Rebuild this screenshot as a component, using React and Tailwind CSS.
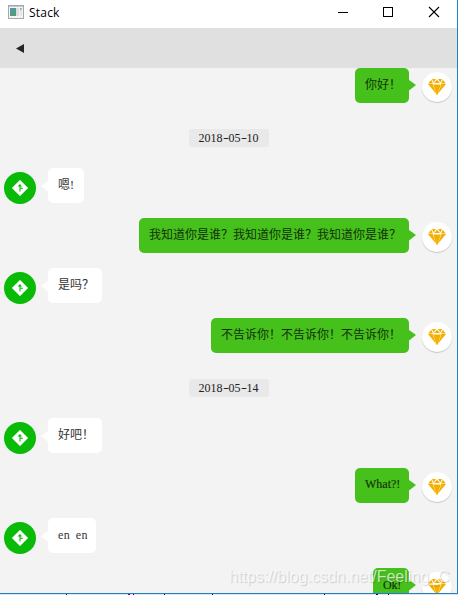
import React from "react";

const messages = [
    { id: 1, type: "sent", text: "你好！", width: "w-[54px] pt-[9px]" },
    { id: 2, type: "date", text: "2018-05-10" },
    { id: 3, type: "received", text: "嗯!", width: "w-[36px] pt-[9px]" },
    { id: 4, type: "sent", text: "我知道你是谁？我知道你是谁？我知道你是谁？", width: "w-[270px] pt-[9px]" },
    { id: 5, type: "received", text: "是吗？", width: "w-[54px] pt-[9px]" },
    { id: 6, type: "sent", text: "不告诉你！不告诉你！不告诉你！", width: "w-[198px] pt-[9px]" },
    { id: 7, type: "date", text: "2018-05-14" },
    { id: 8, type: "received", text: "好吧！", width: "w-[54px] pt-[9px]" },
    { id: 9, type: "sent", text: "What?!", width: "w-[54px] pt-[8px] [-webkit-text-stroke:0.15px]" },
    { id: 10, type: "received", text: "en en", width: "w-[48px] pt-[9px] tracking-[0.3px] [word-spacing:2.6px]" },
    { id: 11, type: "sent", text: "Ok!", width: "w-[36px] pt-[9px] tracking-[-0.2px] [-webkit-text-stroke:0.15px]" },
];

// Marks left behind by the window underneath
const specks = [
    { x: 66, w: 1, color: "#222222" },
    { x: 128, w: 2, color: "#800080" },
    { x: 133, w: 1, color: "#00007a" },
    { x: 164, w: 1, color: "#00007a" },
    { x: 212, w: 1, color: "#00007a" },
    { x: 324, w: 1, color: "#00007a" },
    { x: 376, w: 2, color: "#00007a" },
    { x: 388, w: 1, color: "#00007a" },
];

function AppIcon() {
    return (
        <svg width="16" height="14" viewBox="0 0 16 14">
            <defs>
                <linearGradient id="pane" x1="0" y1="0" x2="0.6" y2="1">
                    <stop offset="0" stopColor="#5b8fc0" />
                    <stop offset="1" stopColor="#4da26b" />
                </linearGradient>
            </defs>
            <rect x="0.5" y="0.5" width="15" height="13" fill="#f4f4f4" stroke="#a3a8ae" />
            <path d="M1 1.5h14" stroke="#c3c7cd" />
            <rect x="2" y="3" width="6" height="8" fill="url(#pane)" />
            <rect x="8" y="3" width="3" height="8" fill="#dedede" />
            <rect x="12" y="3" width="2" height="8" fill="#e4e9e8" />
            <path d="M12 6V3h2v1z" fill="#8db5cc" />
        </svg>
    );
}

function TitleBar() {
    return (
        <div className="flex h-7 shrink-0 items-start bg-white">
            <div className="ml-2 mt-[5px]">
                <AppIcon />
            </div>
            <span className="ml-[5px] mt-[4px] flex-1 font-['Open_Sans',sans-serif] text-[12px] leading-[18px] tracking-[0.2px] text-black">
                Stack
            </span>
            <svg className="mr-[17px]" width="103" height="24" fill="none" stroke="#000" shapeRendering="crispEdges">
                <path d="M1 12.5h10" />
                <rect x="46.5" y="7.5" width="9" height="9" />
                <path d="M92 7l10 10M102 7l-10 10" shapeRendering="auto" strokeWidth="1.1" />
            </svg>
        </div>
    );
}

function DiamondAvatar() {
    return (
        <div className="mt-1 flex h-[30px] w-[30px] items-center justify-center rounded-full bg-white shadow-[0_1px_1px_rgba(0,0,0,0.18)]">
            <svg width="18" height="16" viewBox="0 0 18 16">
                <path d="M4 0h4L5.5 3.6zM10 0h4l-1.5 3.6zM9 0.8L12 4H6zM3.2 0.8L5 4.6H0.2zM14.8 0.8l3 3.8H13z" fill="#f4b000" />
                <path d="M0 5h4.6L8 14.8zM18 5h-4.6L10 14.8zM5.2 5.6h7.6L9.4 16h-0.8z" fill="#f4b000" />
            </svg>
        </div>
    );
}

function SignAvatar() {
    return (
        <div className="mt-1 flex h-8 w-8 items-center justify-center rounded-full bg-[#09bb07]">
            <svg width="18" height="18" viewBox="0 0 18 18">
                <path d="M9 1.2L16.8 9 9 16.8 1.2 9z" fill="#fff" stroke="#fff" strokeWidth="0.6" strokeLinejoin="round" />
                <path d="M6.5 7.5L9 5l2 2.5z" fill="#09bb07" />
                <path d="M9 6.5v6M9 9.3h3" fill="none" stroke="#09bb07" strokeWidth="1.1" />
            </svg>
        </div>
    );
}

function Bubble({ text, width, className }) {
    return (
        <div
            className={`h-[35px] whitespace-nowrap rounded-[5px] pl-[10px] font-['Liberation_Serif','Noto_Sans_CJK_SC',serif] text-[12px] leading-[16px] ${width} ${className}`}
        >
            {text}
        </div>
    );
}

function DateRow({ text }) {
    return (
        <div className="flex h-[50px] shrink-0 justify-center pt-[11px]">
            <div className="flex h-[18px] w-[80px] items-center justify-center rounded-[3px] bg-[#e9e9e9] font-['Liberation_Serif',serif] text-[12px] leading-[18px] text-[#222]">
                {text.split("-").map((part, i) => (
                    <React.Fragment key={i}>
                        {i > 0 && <span className="w-[6px] scale-x-150 text-center">-</span>}
                        <span>{part}</span>
                    </React.Fragment>
                ))}
            </div>
        </div>
    );
}

function SentRow({ text, width }) {
    return (
        <div className="flex h-[50px] shrink-0 items-start justify-end pr-[5px]">
            <Bubble text={text} width={width} className="bg-[#46c01b] text-[#12300a]" />
            <svg className="mr-[6px] mt-[12px]" width="7" height="11">
                <path d="M0 0l7 5-7 5.5z" fill="#46c01b" />
            </svg>
            <DiamondAvatar />
        </div>
    );
}

function ReceivedRow({ text, width }) {
    return (
        <div className="flex h-[50px] shrink-0 items-start pl-1">
            <SignAvatar />
            <svg className="ml-[5px] mt-[13px]" width="7" height="11">
                <path d="M7 0L0 5l7 5.5z" fill="#fff" />
            </svg>
            <Bubble text={text} width={width} className="bg-white text-[#333]" />
        </div>
    );
}

function App() {
    return (
        <div className="relative h-[595px] w-[458px] overflow-hidden bg-[#e4e4e4]">
            <div className="flex h-[594px] flex-col overflow-hidden border-b border-r border-solid border-b-[#1c80cc] border-r-[#1c80cc] bg-[#f3f3f3]">
                <TitleBar />

                {/* Toolbar */}
                <div className="flex h-10 shrink-0 items-center bg-[#e0e0e0] pl-4">
                    <svg width="8" height="9">
                        <path d="M8 0v9L0 4.5z" fill="#252525" />
                    </svg>
                </div>

                {/* Conversation */}
                <div className="flex min-h-0 flex-1 flex-col overflow-hidden">
                    {messages.map(({ id, type, text, width }) => {
                        if (type === "date") return <DateRow key={id} text={text} />;
                        if (type === "sent") return <SentRow key={id} text={text} width={width} />;
                        return <ReceivedRow key={id} text={text} width={width} />;
                    })}
                </div>
            </div>

            <svg className="block" width="458" height="1">
                {specks.map((s) => (
                    <rect key={s.x} x={s.x} width={s.w} height="1" fill={s.color} />
                ))}
            </svg>

            {/* Watermark */}
            <div className="absolute left-[229px] top-[567px] whitespace-nowrap font-['Liberation_Sans',sans-serif] text-[16px] leading-[20px] text-white/70 [text-shadow:1px_1px_1px_rgba(0,0,0,0.16)]">
                https://blog.csdn.net/Feeling_C
            </div>
        </div>
    );
}

export default App;
